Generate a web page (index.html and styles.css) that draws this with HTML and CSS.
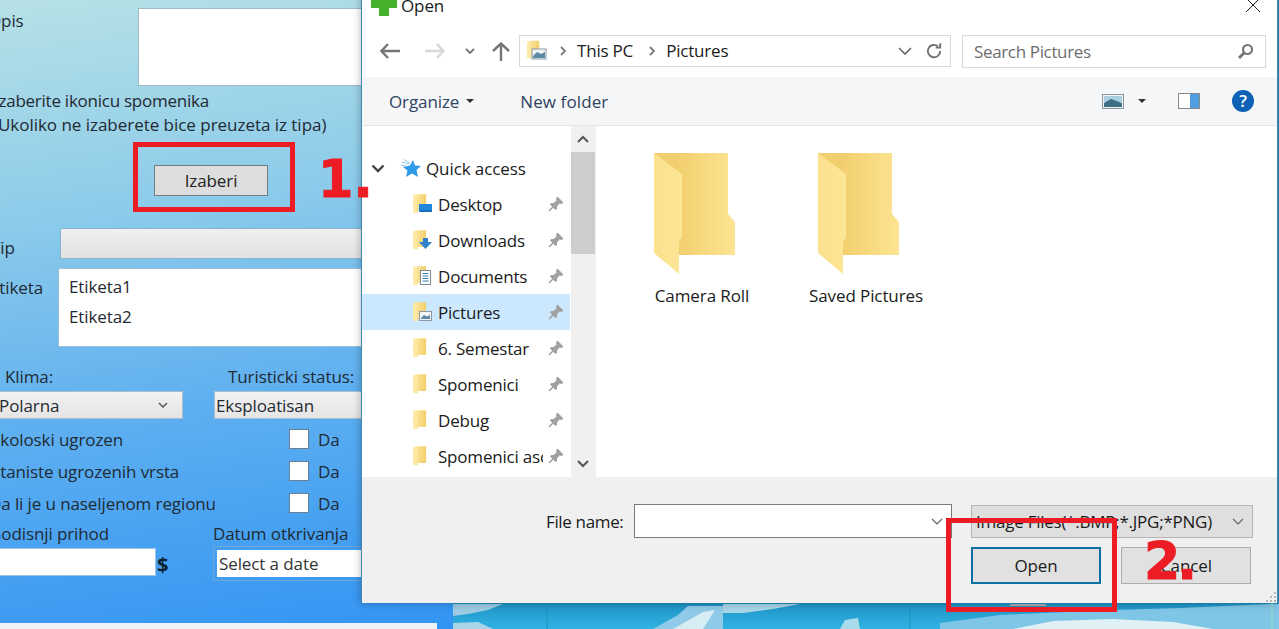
FILE: index.html
```html
<!DOCTYPE html>
<html lang="en">
<head>
    <meta charset="UTF-8">
    <title>Izaberi ikonicu</title>
    <link rel="stylesheet" href="styles.css">
</head>
<body>

    <svg class="defs" width="0" height="0">
        <defs>
            <linearGradient id="backGrad" x1="0" x2="1" y1="0" y2="0">
                <stop offset="0.3" stop-color="#f2cf6e"/>
                <stop offset="1" stop-color="#fde493"/>
            </linearGradient>
            <linearGradient id="flapGrad" x1="0" x2="1" y1="0" y2="0">
                <stop offset="0" stop-color="#fbe08d"/>
                <stop offset="1" stop-color="#fde697"/>
            </linearGradient>
            <linearGradient id="smallGrad" x1="0" x2="1" y1="0" y2="0">
                <stop offset="0" stop-color="#fdeaa6"/>
                <stop offset="1" stop-color="#f3cf6c"/>
            </linearGradient>
        </defs>
        <symbol id="bigFolder" viewBox="0 0 82 122">
            <polygon points="0,0 74,0 74,61 81,69 81,102 25,102" fill="url(#backGrad)"/>
            <polygon points="0,0 28,21 28,84 25,89 25,121 0,100" fill="url(#flapGrad)"/>
        </symbol>
        <symbol id="smallFolder" viewBox="0 0 16 21">
            <polygon points="0,1 5,0 14,0 14,18 5,18 5,20 1,20 0,19" fill="url(#smallGrad)"/>
            <rect x="0" y="1" width="4" height="18" fill="#fdeaa6"/>
        </symbol>
        <symbol id="pin" viewBox="0 0 16 16">
            <path d="M9.5 0.5 L15.5 6.5 L13.5 8 L11.5 7.5 L9 10.5 L9 13 L7.5 14 L2 8.5 L3 7 L5.5 7 L8.5 4.5 L8 2.5 Z" fill="#a0a0a0"/>
            <path d="M5 11 L1 15" stroke="#a0a0a0" stroke-width="1.6"/>
        </symbol>
    </svg>

    <!-- Form behind the dialog -->
    <div class="form-panel">
        <div class="field-row opis-row">
            <span class="clip-label opis-label">Opis</span>
            <div class="text-box opis-box"></div>
        </div>

        <div class="note">
            <div class="note-first">Izaberite ikonicu spomenika</div>
            <div class="note-second">(Ukoliko ne izaberete bice preuzeta iz tipa)</div>
        </div>

        <button class="choose-btn">Izaberi</button>

        <div class="field-row tip-row">
            <span class="clip-label tip-label">Tip</span>
            <div class="tip-box"></div>
        </div>

        <div class="field-row etiketa-row">
            <span class="clip-label etiketa-label">Etiketa</span>
            <div class="text-box etiketa-box">
                <div>Etiketa1</div>
                <div>Etiketa2</div>
            </div>
        </div>

        <div class="two-col label-row">
            <span class="klima-label">Klima:</span>
            <span class="status-label">Turisticki status:</span>
        </div>

        <div class="two-col select-row">
            <div class="select-box klima-select">
                <span>Polarna</span>
                <svg width="10" height="6" viewBox="0 0 10 6"><path d="M1 1 L5 5 L9 1" fill="none" stroke="#555" stroke-width="1.5"/></svg>
            </div>
            <div class="select-box status-select"><span>Eksploatisan</span></div>
        </div>

        <div class="check-row first-check">
            <span class="check-label l-eko">Ekoloski ugrozen</span>
            <span class="check-box"></span>
            <span>Da</span>
        </div>
        <div class="check-row">
            <span class="check-label l-stan">Staniste ugrozenih vrsta</span>
            <span class="check-box"></span>
            <span>Da</span>
        </div>
        <div class="check-row">
            <span class="check-label l-reg">Da li je u naseljenom regionu</span>
            <span class="check-box"></span>
            <span>Da</span>
        </div>

        <div class="two-col income-labels">
            <span class="income-label">Godisnji prihod</span>
            <span class="date-label">Datum otkrivanja</span>
        </div>

        <div class="two-col income-row">
            <div class="income-box"></div>
            <span class="dollar">$</span>
            <div class="date-frame"><div class="date-box">Select a date</div></div>
        </div>

        <div class="bottom-strip"></div>
    </div>

    <!-- Desktop wallpaper (map) -->
    <div class="map">
        <svg width="826" height="629" viewBox="0 0 826 629">
            <defs>
                <linearGradient id="seaGrad" x1="0" x2="0" y1="0.958" y2="1">
                    <stop offset="0" stop-color="#1f92c4"/>
                    <stop offset="1" stop-color="#30b3e4"/>
                </linearGradient>
            </defs>
            <rect width="826" height="629" fill="url(#seaGrad)"/>
            <path d="M94 603 V629 M457 603 V629 M747 603 V629" stroke="#1f8fc0"/>
            <polygon points="0,604 50,604 35,610 15,614 0,616" fill="#9dcbe3"/>
            <polygon points="0,623 25,622 40,629 0,629" fill="#a9d4e8"/>
            <polygon points="200,629 225,615 235,606 270,606 270,629" fill="#8fcbe8"/>
            <polygon points="220,629 250,612 262,610 250,629" fill="#d6edf4"/>
            <polygon points="270,604 347,604 320,609 290,613 270,613" fill="#a7d6e8"/>
            <polygon points="387,629 392,620 405,618 407,629" fill="#a9dcea"/>
            <polygon points="487,623 547,615 660,610 727,608 817,604 826,604 826,629 487,629" fill="#7fc6e6"/>
            <polygon points="560,629 600,621 660,619 720,622 760,629" fill="#dff1f5"/>
            <rect x="557" y="604" width="36" height="2" fill="#b9a9b0"/>
            <path d="M819 603 V629" stroke="#a6dcc0"/>
        </svg>
    </div>

    <!-- Open file dialog -->
    <div class="dialog">
        <div class="title-bar">
            <svg class="app-icon" width="26" height="26" viewBox="0 0 26 26">
                <path d="M8 0 H18 V8 H26 V18 H18 V26 H8 V18 H0 V8 H8 Z" fill="#45b02c"/>
            </svg>
            <span class="title-text">Open</span>
            <svg class="close-icon" width="16" height="16" viewBox="0 0 16 16"><path d="M1 1 L15 15 M15 1 L1 15" stroke="#222" stroke-width="1"/></svg>
        </div>

        <div class="nav-row">
            <svg class="nav-back" width="20" height="16" viewBox="0 0 20 16"><path d="M8 1 L1.5 8 L8 15 M2 8 H20" fill="none" stroke="#757575" stroke-width="2.4"/></svg>
            <svg class="nav-forward" width="20" height="16" viewBox="0 0 20 16"><path d="M12 1 L18.5 8 L12 15 M18 8 H0" fill="none" stroke="#d8d8d8" stroke-width="2.4"/></svg>
            <svg class="nav-down" width="10" height="6" viewBox="0 0 10 6"><path d="M1 1 L5 5 L9 1" fill="none" stroke="#757575" stroke-width="1.8"/></svg>
            <svg class="nav-up" width="18" height="19" viewBox="0 0 18 19"><path d="M1 9 L9 1.5 L17 9 M9 2 V19" fill="none" stroke="#757575" stroke-width="2.4"/></svg>

            <div class="address">
                <svg class="addr-folder" width="20" height="21" viewBox="0 0 20 21">
                    <use href="#smallFolder" width="14" height="20"/>
                    <rect x="5" y="9" width="14" height="10" fill="#f4f4f4" stroke="#8a9aa6"/>
                    <path d="M6 16 L10 12 L14 14 L18 12 V18 H6 Z" fill="#5a8aa5"/>
                </svg>
                <svg class="crumb-sep" width="6" height="10" viewBox="0 0 6 10"><path d="M1 1 L5 5 L1 9" fill="none" stroke="#777" stroke-width="1.8"/></svg>
                <span class="crumb">This PC</span>
                <svg class="crumb-sep" width="6" height="10" viewBox="0 0 6 10"><path d="M1 1 L5 5 L1 9" fill="none" stroke="#777" stroke-width="1.8"/></svg>
                <span class="crumb">Pictures</span>
                <svg class="addr-drop" width="14" height="8" viewBox="0 0 14 8"><path d="M1 1 L7 7 L13 1" fill="none" stroke="#666" stroke-width="1.6"/></svg>
                <div class="addr-refresh">
                    <svg width="18" height="18" viewBox="0 0 16 16"><path d="M13.5 8 A5.5 5.5 0 1 1 11.5 3.8 M13.5 1 V5 H9.5" fill="none" stroke="#707070" stroke-width="1.7"/></svg>
                </div>
            </div>

            <div class="search">
                <span>Search Pictures</span>
                <svg width="17" height="17" viewBox="0 0 17 17"><circle cx="10.5" cy="6.5" r="4.5" fill="none" stroke="#777" stroke-width="2.2"/><path d="M7 10 L2 15" stroke="#777" stroke-width="3"/></svg>
            </div>
        </div>

        <div class="command-bar">
            <span class="cmd-item">Organize</span>
            <span class="caret"></span>
            <span class="cmd-item new-folder">New folder</span>
            <svg class="view-icon" width="22" height="15" viewBox="0 0 22 15">
                <rect x="0.5" y="0.5" width="21" height="14" fill="#eef3f6" stroke="#8a949c"/>
                <rect x="2" y="2" width="18" height="6" fill="#a9cfe0"/>
                <path d="M2 9 L9 5 L20 9 V13 H2 Z" fill="#3f6f85"/>
            </svg>
            <span class="caret view-caret"></span>
            <svg class="pane-icon" width="22" height="16" viewBox="0 0 22 16">
                <rect x="0.5" y="0.5" width="21" height="15" fill="#fff" stroke="#8a8a8a"/>
                <rect x="12" y="1" width="9" height="14" fill="#4f9fe0"/>
            </svg>
            <svg class="help-icon" width="22" height="22" viewBox="0 0 22 22">
                <circle cx="11" cy="11" r="11" fill="#0d62b5"/>
                <text x="11" y="17" text-anchor="middle" class="help-mark">?</text>
            </svg>
        </div>

        <div class="main-area">
            <div class="tree">
                <div class="tree-row quick-row">
                    <svg class="quick-chev" width="14" height="9" viewBox="0 0 14 9"><path d="M1.5 1.5 L7 7 L12.5 1.5" fill="none" stroke="#444" stroke-width="2.4"/></svg>
                    <svg class="star" width="20" height="19" viewBox="0 0 20 19">
                        <path d="M12 1 L14 6.5 L20 7 L15.5 11 L17 18 L11 14.5 L5 18 L6.5 11.5 L2 8 L9 6.5 Z" fill="#2f9be8"/>
                        <path d="M1 3 L8 5 M3 0.5 L9 4 M0 6 L5 7" stroke="#8cc6ee"/>
                    </svg>
                    <span>Quick access</span>
                </div>

                <div class="tree-row item-row">
                    <svg class="tree-folder" width="20" height="21" viewBox="0 0 20 21"><use href="#smallFolder" width="15" height="20"/><path d="M6 10 H19 V18 H6 Z" fill="#1f86dc"/><path d="M7 17 H19" stroke="#0e5a9e"/></svg>
                    <span class="tree-label">Desktop</span>
                    <svg class="pin" width="16" height="16"><use href="#pin"/></svg>
                </div>
                <div class="tree-row item-row">
                    <svg class="tree-folder" width="20" height="21" viewBox="0 0 20 21"><use href="#smallFolder" width="15" height="20"/><path d="M10 8 H15 V12 H19 L12.5 19 L6 12 H10 Z" fill="#2f82c9"/></svg>
                    <span class="tree-label">Downloads</span>
                    <svg class="pin" width="16" height="16"><use href="#pin"/></svg>
                </div>
                <div class="tree-row item-row">
                    <svg class="tree-folder" width="20" height="21" viewBox="0 0 20 21"><use href="#smallFolder" width="15" height="20"/><rect x="7.5" y="4.5" width="10" height="14" fill="#fff" stroke="#7d8b96"/><path d="M9.5 7.5 H15.5 M9.5 10 H15.5 M9.5 12.5 H15.5 M9.5 15 H15.5" stroke="#3f7fae"/></svg>
                    <span class="tree-label">Documents</span>
                    <svg class="pin" width="16" height="16"><use href="#pin"/></svg>
                </div>
                <div class="tree-row item-row selected">
                    <svg class="tree-folder" width="20" height="21" viewBox="0 0 20 21"><use href="#smallFolder" width="15" height="20"/><rect x="6.5" y="9.5" width="12" height="9" fill="#f4f4f4" stroke="#8a9aa6"/><path d="M8 16 L11 13 L14 14.5 L17 13 V17 H8 Z" fill="#5a8aa5"/></svg>
                    <span class="tree-label">Pictures</span>
                    <svg class="pin" width="16" height="16"><use href="#pin"/></svg>
                </div>
                <div class="tree-row item-row">
                    <svg class="tree-folder" width="20" height="21" viewBox="0 0 20 21"><use href="#smallFolder" width="15" height="20"/></svg>
                    <span class="tree-label">6. Semestar</span>
                    <svg class="pin" width="16" height="16"><use href="#pin"/></svg>
                </div>
                <div class="tree-row item-row">
                    <svg class="tree-folder" width="20" height="21" viewBox="0 0 20 21"><use href="#smallFolder" width="15" height="20"/></svg>
                    <span class="tree-label">Spomenici</span>
                    <svg class="pin" width="16" height="16"><use href="#pin"/></svg>
                </div>
                <div class="tree-row item-row">
                    <svg class="tree-folder" width="20" height="21" viewBox="0 0 20 21"><use href="#smallFolder" width="15" height="20"/></svg>
                    <span class="tree-label">Debug</span>
                    <svg class="pin" width="16" height="16"><use href="#pin"/></svg>
                </div>
                <div class="tree-row item-row">
                    <svg class="tree-folder" width="20" height="21" viewBox="0 0 20 21"><use href="#smallFolder" width="15" height="20"/></svg>
                    <span class="tree-label">Spomenici asocijacije</span>
                    <svg class="pin" width="16" height="16"><use href="#pin"/></svg>
                </div>
            </div>

            <div class="scrollbar">
                <div class="scroll-btn">
                    <svg width="12" height="8" viewBox="0 0 12 8"><path d="M1 7 L6 2 L11 7" fill="none" stroke="#555" stroke-width="2"/></svg>
                </div>
                <div class="scroll-thumb"></div>
                <div class="scroll-rest"></div>
                <div class="scroll-btn">
                    <svg width="12" height="8" viewBox="0 0 12 8"><path d="M1 1 L6 6 L11 1" fill="none" stroke="#555" stroke-width="2"/></svg>
                </div>
            </div>

            <div class="files">
                <div class="file-item">
                    <svg class="big-folder" width="82" height="122"><use href="#bigFolder"/></svg>
                    <span>Camera Roll</span>
                </div>
                <div class="file-item">
                    <svg class="big-folder" width="82" height="122"><use href="#bigFolder"/></svg>
                    <span>Saved Pictures</span>
                </div>
            </div>
        </div>

        <div class="footer">
            <div class="name-row">
                <span class="name-label">File name:</span>
                <div class="name-input">
                    <svg width="12" height="7" viewBox="0 0 12 7"><path d="M1 1 L6 6 L11 1" fill="none" stroke="#666" stroke-width="1.2"/></svg>
                </div>
                <div class="filter">
                    <span>Image Files(*.BMP;*.JPG;*PNG)</span>
                    <svg width="12" height="7" viewBox="0 0 12 7"><path d="M1 1 L6 6 L11 1" fill="none" stroke="#666" stroke-width="1.2"/></svg>
                </div>
            </div>
            <div class="button-row">
                <button class="dlg-btn default-btn">Open</button>
                <button class="dlg-btn">Cancel</button>
            </div>
            <svg class="grip" width="12" height="12" viewBox="0 0 12 12"><path d="M9 1h2v2H9z M5 5h2v2H5z M9 5h2v2H9z M1 9h2v2H1z M5 9h2v2H5z M9 9h2v2H9z" fill="#b5b5b5"/></svg>
        </div>
    </div>

    <!-- Red tutorial marks -->
    <div class="mark mark-box-one"></div>
    <div class="mark-num num-one">1.</div>
    <div class="mark mark-box-two"></div>
    <div class="mark-num num-two">2.</div>

</body>
</html>
```

FILE: styles.css
```css
/* General Styles */
html, body {
    height: 100%;
}

body {
    margin: 0;
    width: 1279px;
    height: 629px;
    overflow: hidden;
    position: relative;
    display: flex;
    font-family: 'Open Sans', 'Noto Sans', sans-serif;
    font-size: 17px;
    letter-spacing: -0.1px;
    color: #1f2a33;
}

.defs {
    position: absolute;
}

/* Form behind the dialog */
.form-panel {
    width: 453px;
    height: 629px;
    flex-shrink: 0;
    padding-top: 8px;
    box-sizing: border-box;
    overflow: hidden;
    background: linear-gradient(172deg, #b6e1e6 0%, #8ccbea 33%, #5fb0f0 62%, #3294f3 100%);
}

.field-row {
    display: flex;
    align-items: flex-start;
}

.clip-label {
    flex-shrink: 0;
}

.text-box {
    background: #fff;
    border: 1px solid #a3b8c4;
    box-sizing: border-box;
    flex: 1;
}

.opis-row {
    height: 78px;
}

.opis-label {
    margin: 1px 0 0 -12px;
    width: 150px;
}

.opis-box {
    height: 78px;
}

.note {
    margin-top: 3px;
    height: 48px;
    line-height: 24px;
}

.note-first {
    margin-left: -6px;
    letter-spacing: -0.25px;
}

.note-second {
    margin-left: -7px;
    letter-spacing: -0.03px;
}

.choose-btn {
    display: block;
    margin: 28px 0 0 154px;
    width: 114px;
    height: 31px;
    background: #dddddd;
    border: 1px solid #6f7f88;
    font: inherit;
    letter-spacing: inherit;
    color: #222;
    padding: 0;
}

.tip-row {
    margin-top: 32px;
    height: 31px;
}

.tip-label {
    margin: 8px 0 0 -9px;
    width: 69px;
}

.tip-box {
    flex: 1;
    height: 31px;
    box-sizing: border-box;
    border: 1px solid #86b4d2;
    background: linear-gradient(#f0f0f0, #e2e2e2);
}

.etiketa-row {
    margin-top: 9px;
    height: 79px;
}

.etiketa-label {
    margin: 8px 0 0 -10px;
    width: 68px;
}

.etiketa-box {
    height: 79px;
    padding: 3px 0 0 10px;
    line-height: 30px;
    border-color: #9cc0da;
}

.two-col {
    display: flex;
}

.label-row {
    margin-top: 17px;
    height: 25px;
    line-height: 25px;
}

.klima-label {
    margin-left: 5px;
    width: 223px;
}

.select-row {
    height: 28px;
    margin-top: 2px;
}

.select-box {
    box-sizing: border-box;
    height: 28px;
    display: flex;
    align-items: center;
    justify-content: space-between;
    border: 1px solid #a8bfd0;
    background: linear-gradient(#f2f2f2, #e5e5e5);
}

.klima-select {
    margin-left: -4px;
    width: 187px;
    padding: 0 14px 0 2px;
}

.status-select {
    margin-left: 31px;
    flex: 1;
    padding-left: 1px;
}

.check-row {
    display: flex;
    align-items: center;
    height: 32px;
}

.first-check {
    margin-top: 4px;
}

.check-label {
    width: 289px;
    flex-shrink: 0;
}

.l-eko {
    margin-left: -9px;
    width: 298px;
}

.l-stan {
    margin-left: -9px;
    width: 298px;
}

.l-reg {
    margin-left: -11px;
    width: 300px;
}

.check-box {
    width: 20px;
    height: 20px;
    box-sizing: border-box;
    background: #fff;
    border: 1px solid #6c7f90;
    margin-right: 9px;
}

.income-labels {
    margin-top: 1px;
    height: 28px;
    line-height: 28px;
}

.income-label {
    margin-left: -11px;
    width: 224px;
}

.income-row {
    height: 40px;
}

.income-box {
    margin-left: -4px;
    width: 160px;
    height: 28px;
    background: #fff;
    border: 1px solid #9cc4e8;
    box-sizing: border-box;
}

.dollar {
    width: 57px;
    margin-top: 3px;
    padding-left: 1px;
    box-sizing: border-box;
    font-weight: 700;
    font-size: 20px;
    color: #0c2030;
}

.date-frame {
    flex: 1;
    height: 35px;
    margin-top: -2px;
    box-sizing: border-box;
    padding: 3px 0 0 3px;
    border: 1px solid #6fa5d8;
}

.date-box {
    height: 27px;
    line-height: 27px;
    background: #fff;
    padding-left: 2px;
    color: #333;
}

.bottom-strip {
    margin-top: 35px;
    width: 437px;
    height: 10px;
    background: #eef3f6;
}

/* Wallpaper */
.map {
    flex: 1;
    height: 629px;
}

/* Dialog */
.dialog {
    position: absolute;
    left: 361px;
    top: -15px;
    width: 917px;
    height: 618px;
    box-sizing: border-box;
    display: flex;
    flex-direction: column;
    background: #fff;
    border-left: 1px solid #3d8bb5;
    border-right: 1px solid #3d8bb5;
    box-shadow: 0 0 8px rgba(0, 0, 0, 0.3);
    color: #1b1b1b;
}

.title-bar {
    height: 40px;
    flex-shrink: 0;
    display: flex;
    align-items: center;
    padding-left: 9px;
}

.app-icon {
    margin-top: -4px;
}

.title-text {
    margin-left: 4px;
}

.close-icon {
    margin-left: auto;
    margin-right: 16px;
}

.nav-row {
    height: 52px;
    flex-shrink: 0;
    display: flex;
    align-items: center;
    padding-left: 18px;
}

.nav-forward {
    margin-left: 25px;
}

.nav-down {
    margin-left: 20px;
}

.nav-up {
    margin-left: 17px;
    margin-right: 9px;
}

.address {
    width: 432px;
    height: 32px;
    box-sizing: border-box;
    border: 1px solid #d9d9d9;
    display: flex;
    align-items: center;
    padding-left: 7px;
    padding-bottom: 1px;
}

.crumb-sep {
    margin: 0 11px 0 13px;
}

.crumb {
    margin-right: 3px;
    letter-spacing: -0.2px;
}

.addr-drop {
    margin-left: auto;
}

.addr-refresh {
    width: 36px;
    height: 30px;
    display: flex;
    align-items: center;
    justify-content: center;
    padding-left: 3px;
    box-sizing: border-box;
    margin-left: 2px;
    flex-shrink: 0;
}

.search {
    margin-left: 11px;
    width: 304px;
    height: 33px;
    box-sizing: border-box;
    border: 1px solid #d9d9d9;
    display: flex;
    align-items: center;
    justify-content: space-between;
    padding: 0 11px 0 11px;
    color: #6d6d6d;
    letter-spacing: -0.35px;
}

.command-bar {
    height: 49px;
    flex-shrink: 0;
    box-sizing: border-box;
    display: flex;
    align-items: center;
    padding-left: 27px;
    background: #f5f6f7;
    border-bottom: 1px solid #e5e5e5;
    color: #2e4460;
}

.caret {
    width: 0;
    height: 0;
    margin-left: 7px;
    border-left: 4px solid transparent;
    border-right: 4px solid transparent;
    border-top: 4px solid #333;
}

.new-folder {
    margin-left: 46px;
    letter-spacing: 0.1px;
}

.view-icon {
    margin-left: auto;
}

.view-caret {
    margin-left: 14px;
}

.pane-icon {
    margin-left: 32px;
}

.help-icon {
    margin-left: 32px;
    margin-right: 23px;
}

.help-mark {
    fill: #fff;
    font-family: 'Open Sans', sans-serif;
    font-size: 17px;
    font-weight: 600;
}

.main-area {
    height: 351px;
    flex-shrink: 0;
    display: flex;
}

.tree {
    width: 208px;
    padding-top: 24px;
    box-sizing: border-box;
}

.tree-row {
    height: 36px;
    display: flex;
    align-items: center;
}

.quick-chev {
    margin-left: 9px;
}

.star {
    margin: 0 5px 0 16px;
}

.item-row {
    padding-left: 51px;
}

.item-row.selected {
    background: #cce8ff;
}

.tree-folder {
    width: 20px;
    flex-shrink: 0;
    margin-right: 5px;
}

.tree-label {
    width: 105px;
    overflow: hidden;
    white-space: nowrap;
    margin-right: 5px;
    flex-shrink: 0;
    letter-spacing: -0.2px;
}

.scrollbar {
    width: 24px;
    margin-left: 1px;
    display: flex;
    flex-direction: column;
    background: #f0f0f0;
}

.scroll-btn {
    height: 26px;
    display: flex;
    align-items: center;
    justify-content: center;
    flex-shrink: 0;
}

.scroll-thumb {
    height: 102px;
    background: #cdcdcd;
    flex-shrink: 0;
}

.scroll-rest {
    flex: 1;
}

.files {
    flex: 1;
    display: flex;
    align-items: flex-start;
    padding: 27px 0 0 24px;
    border-left: 1px solid #f0f0f0;
}

.file-item {
    width: 164px;
    display: flex;
    flex-direction: column;
    align-items: center;
    white-space: nowrap;
}

.big-folder {
    margin-left: -14px;
    margin-bottom: 9px;
}

.footer {
    height: 126px;
    flex-shrink: 0;
    position: relative;
    box-sizing: border-box;
    padding: 27px 0 0 184px;
    background: #f0f0f0;
}

.name-row {
    display: flex;
    align-items: center;
    height: 34px;
}

.name-label {
    width: 88px;
    letter-spacing: -0.35px;
}

.name-input {
    width: 318px;
    height: 34px;
    box-sizing: border-box;
    background: #fff;
    border: 1px solid #7a7a7a;
    display: flex;
    align-items: center;
    justify-content: flex-end;
    padding-right: 8px;
}

.filter {
    margin-left: 19px;
    width: 282px;
    height: 33px;
    box-sizing: border-box;
    background: #dfdfdf;
    border: 1px solid #b5b5b5;
    display: flex;
    align-items: center;
    justify-content: space-between;
    padding: 0 8px 0 4px;
    letter-spacing: -0.25px;
}

.button-row {
    display: flex;
    gap: 20px;
    margin: 9px 0 0 425px;
}

.dlg-btn {
    width: 130px;
    height: 37px;
    box-sizing: border-box;
    background: #e1e1e1;
    border: 1px solid #adadad;
    font: inherit;
    letter-spacing: inherit;
    color: #1b1b1b;
    padding: 0;
}

.default-btn {
    border: 2px solid #0f6fa8;
}

.grip {
    position: absolute;
    right: 0;
    bottom: 0;
}

/* Red tutorial marks */
.mark {
    position: absolute;
    box-sizing: border-box;
    border: 5px solid #ed1c24;
}

.mark-box-one {
    left: 133px;
    top: 142px;
    width: 162px;
    height: 70px;
}

.mark-box-two {
    left: 946px;
    top: 518px;
    width: 171px;
    height: 94px;
}

.mark-num {
    position: absolute;
    color: #ed1c24;
    font-family: 'DejaVu Sans', sans-serif;
    font-weight: 700;
    line-height: 1;
    letter-spacing: 0;
    -webkit-text-stroke: 1px #ed1c24;
}

.num-one {
    left: 318px;
    top: 154px;
    font-size: 51px;
}

.num-two {
    left: 1144px;
    top: 535px;
    font-size: 52px;
    letter-spacing: -3px;
}
```
